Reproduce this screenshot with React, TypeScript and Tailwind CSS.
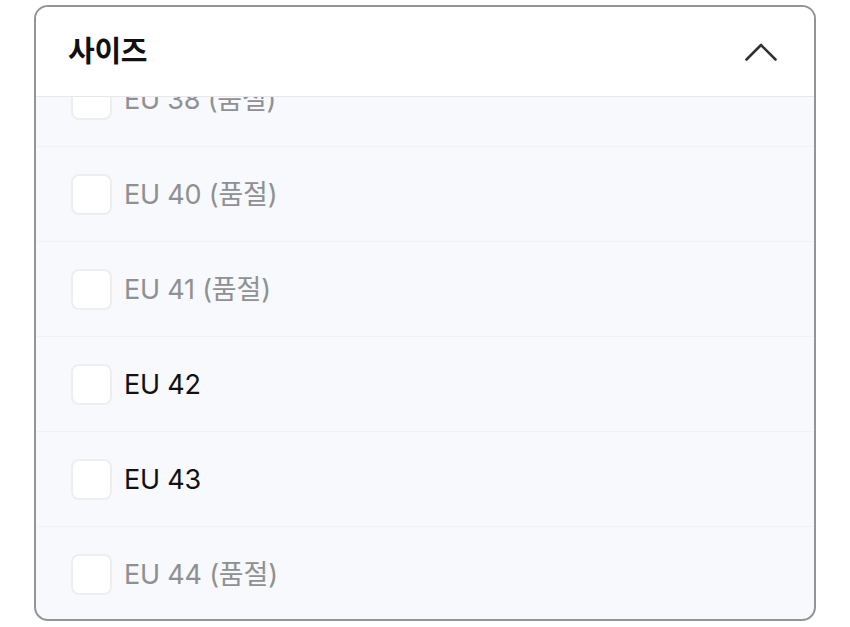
import React, { useCallback } from "react";

type Size = { label: string; soldOut: boolean };

const sizes: Size[] = [
  { label: "EU 38", soldOut: true },
  { label: "EU 40", soldOut: true },
  { label: "EU 41", soldOut: true },
  { label: "EU 42", soldOut: false },
  { label: "EU 43", soldOut: false },
  { label: "EU 44", soldOut: true },
];

const font = { fontFamily: 'Inter, "Noto Sans CJK KR", sans-serif' };

const SizeRow = ({ size }: { size: Size }) => (
  <label className="flex h-[95px] shrink-0 items-center gap-[12px] border-b border-[#f0f2f5] pl-[35px] pr-6">
    <span className="h-[41px] w-[41px] shrink-0 rounded-[8px] border-2 border-[#eceef1] bg-white" />
    <span
      className={
        size.soldOut
          ? "text-[27px] leading-none tracking-[-0.2px] text-[#8f9092]"
          : "text-[27px] leading-none tracking-[-0.2px] text-[#111111]"
      }
    >
      {size.label}
      {size.soldOut && " (품절)"}
    </span>
  </label>
);

export default function App() {
  // list is scrolled a bit so the first option sits under the header
  const listRef = useCallback((el: HTMLDivElement | null) => {
    if (el) el.scrollTop = 45;
  }, []);

  return (
    <div className="h-[627px] w-[850px] bg-white pl-[34px] pt-[5px]" style={font}>
      <div className="flex h-[616px] w-[782px] flex-col overflow-hidden rounded-[14px] border-2 border-[#949494] bg-[#f7f9fc]">
        <div className="flex h-[90px] shrink-0 items-center justify-between border-b border-[#e6e8eb] bg-white pl-[32px] pr-[37px]">
          <h2 className="text-[29px] font-semibold leading-none tracking-[-0.3px] text-[#111111]">사이즈</h2>
          <svg width="32" height="18" viewBox="0 0 32 18" fill="none">
            <path d="M1.5 16.5 16 2 30.5 16.5" stroke="#333333" strokeWidth="2.6" strokeLinecap="round" strokeLinejoin="round" />
          </svg>
        </div>
        <div ref={listRef} className="flex flex-1 flex-col overflow-hidden">
          {sizes.map((s) => (
            <SizeRow key={s.label} size={s} />
          ))}
        </div>
      </div>
    </div>
  );
}
